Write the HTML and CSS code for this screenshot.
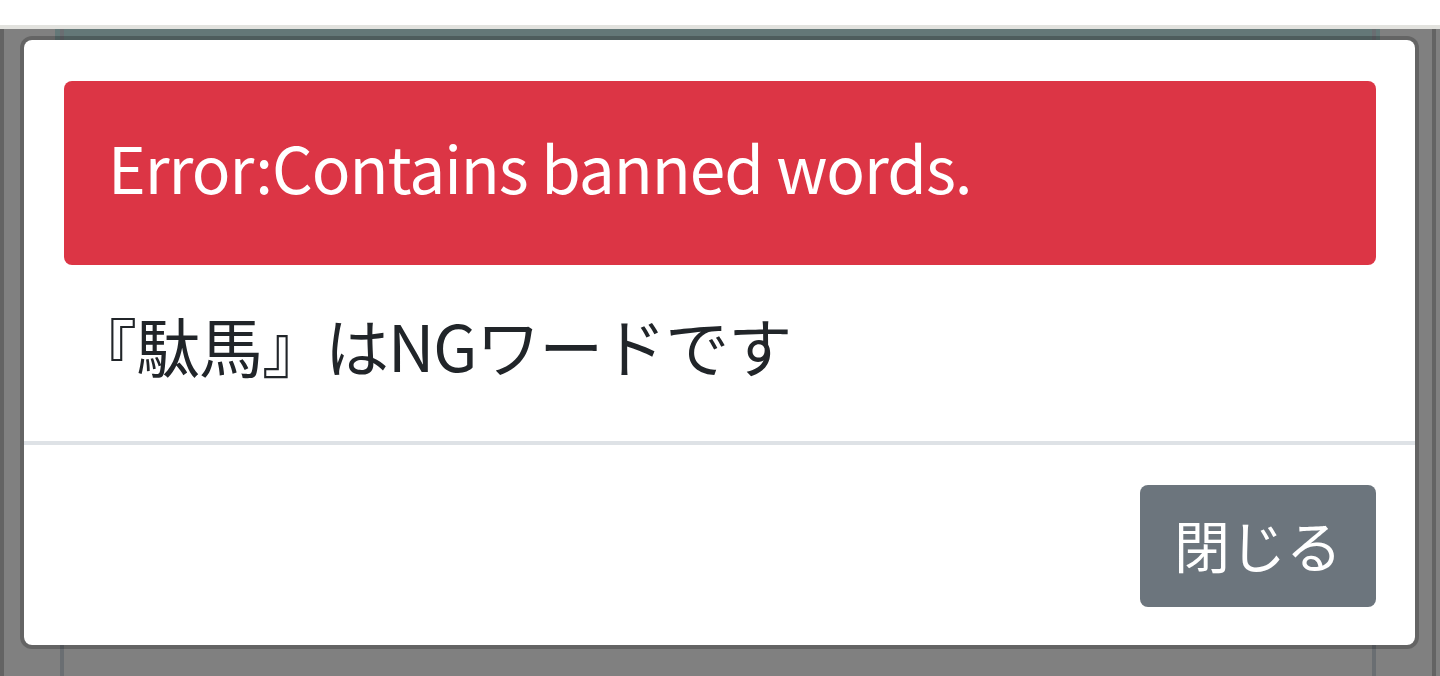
FILE: index.html
```html
<!DOCTYPE html>
<html lang="ja">
<head>
<meta charset="utf-8">
<title>NG</title>
<link rel="stylesheet" href="styles.css">
</head>
<body>
<div class="topbar"></div>
<div class="stage">
  <div class="page-behind">
    <div class="rail rail-left"></div>
    <div class="rail rail-right"></div>
    <div class="header-strip"></div>
    <div class="col-line col-left"></div>
    <div class="col-line col-right"></div>
  </div>
  <div class="modal">
    <div class="modal-body">
      <div class="alert">Error:Contains banned words.</div>
      <p class="message">『駄馬』はNGワードです</p>
    </div>
    <div class="modal-footer">
      <button class="btn">閉じる</button>
    </div>
  </div>
</div>
</body>
</html>
```

FILE: styles.css
```css
html, body {
  margin: 0;
  padding: 0;
}
body {
  width: 1440px;
  height: 676px;
  overflow: hidden;
  background: #808080;
  font-family: "Noto Sans CJK JP", "Noto Sans", sans-serif;
}
.topbar {
  height: 25px;
  background: #ffffff;
  border-bottom: 4px solid #e2e2de;
}
.stage {
  position: relative;
  height: 647px;
  background: #808080;
}
.page-behind {
  position: absolute;
  inset: 0;
}
.rail {
  position: absolute;
  top: 0;
  bottom: 0;
  width: 4px;
  background: #636363;
}
.rail-left { left: 0; }
.rail-right { left: 1432px; }
.header-strip {
  position: absolute;
  left: 55px;
  top: 0;
  width: 1325px;
  height: 40px;
  background: #647878;
}
.col-line {
  position: absolute;
  top: 0;
  bottom: 0;
  width: 4px;
  background: #6a6e72;
}
.col-left { left: 60px; }
.col-right { left: 1372px; }

.modal {
  position: absolute;
  left: 20px;
  top: 7px;
  width: 1399px;
  height: 613px;
  box-sizing: border-box;
  background: #ffffff;
  background-clip: padding-box;
  border: 4px solid rgba(0, 0, 0, 0.22);
  border-radius: 12px;
  display: flex;
  flex-direction: column;
}
.modal-body {
  padding: 41px 39px 0 40px;
  height: 405px;
  box-sizing: border-box;
  border-bottom: 4px solid #dee2e6;
}
.alert {
  height: 184px;
  box-sizing: border-box;
  background: #dc3545;
  color: #ffffff;
  border-radius: 8px;
  padding: 0 0 14px 44px;
  display: flex;
  align-items: center;
  font-size: 64px;
  letter-spacing: -1px;
  line-height: 1;
}
.message {
  margin: 0;
  padding: 0 0 6px 9px;
  height: 164px;
  box-sizing: border-box;
  display: flex;
  align-items: center;
  color: #212529;
  font-size: 64px;
  letter-spacing: -1px;
  line-height: 1;
}
.modal-footer {
  flex: 1;
  display: flex;
  justify-content: flex-end;
  align-items: flex-start;
  padding: 40px 39px 0 0;
}
.btn {
  width: 236px;
  height: 122px;
  border: none;
  border-radius: 8px;
  background: #6c757d;
  color: #ffffff;
  font-family: "Noto Sans CJK JP", "Noto Sans", sans-serif;
  font-size: 56px;
  padding: 0 0 6px 0;
  display: flex;
  align-items: center;
  justify-content: center;
}
```
